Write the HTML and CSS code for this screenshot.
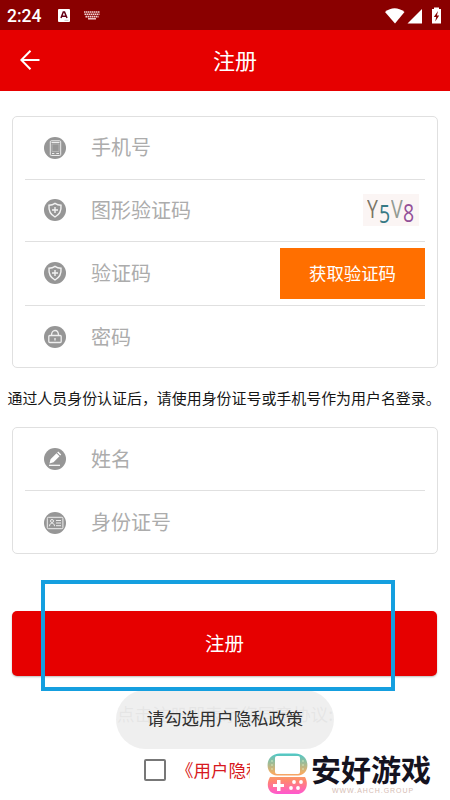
FILE: index.html
```html
<!DOCTYPE html>
<html lang="zh-CN">
<head>
<meta charset="utf-8">
<title>注册</title>
<link rel="stylesheet" href="styles.css">
</head>
<body>
<div class="screen">
  <header class="status">
    <span class="time">2:24</span>
    <svg class="ime" width="12" height="13" viewBox="0 0 12 13"><rect width="12" height="13" rx="1" fill="#fff"/><path d="M3 9 5.3 3h1.2L9 9M4 7.2h4" fill="none" stroke="#650014" stroke-width="1.5"/><path d="M6.5 11.3h4" stroke="#bbb" stroke-width=".8"/></svg>
    <svg class="keyboard" width="16" height="9" viewBox="0 0 16 9" stroke="#f4d5d5" fill="none"><path d="M0 1h16M.5 3.3h15M1.5 5.6h13" stroke-width="1.6" stroke-dasharray="1.5 .5"/><path d="M4 7.8h8" stroke-width="1.4"/></svg>
    <svg class="signals" width="57" height="17" viewBox="0 0 57 17" fill="#fff"><path d="M0 5Q9.500-2.500 19.500 5L10 16.500Z"/><path d="M37 2v14.500H22.500Z"/><path d="M47 2h2V.5h5V2h2v14.500h-9Z"/><path d="M53 4l-4.200 6h2.400l-1 4.500 4-6h-2.300Z" fill="#850000"/></svg>
  </header>
  <nav class="bar">
    <svg class="back" width="20" height="20" viewBox="0 0 20 20" fill="none" stroke="#fff" stroke-width="2"><path d="M19.500 10H1.500M10.500.7 1.300 10l9.200 9.300"/></svg>
    <h1>注册</h1>
  </nav>
  <main>
    <section class="card account">
      <div class="row r1">
        <svg class="icon" viewBox="0 0 22 22"><circle cx="11" cy="11" r="11"/><g fill="none" stroke="#eee"><rect x="6.300" y="3.800" width="10.400" height="14.700" rx="1"/><path d="M8 7h7v7.500H8Z" stroke="#bbb" stroke-width=".8"/><path d="M7.500 5.500h8M8 16.500h2.300m2 0H15"/></g></svg>
        <span>手机号</span>
      </div>
      <div class="row r2">
        <svg class="icon" viewBox="0 0 22 22"><circle cx="11" cy="11" r="11"/><path d="M11 4.300Q13.500 6 17 6.200C17.500 11.500 15.500 15.500 11 18 6.500 15.500 4.500 11.500 5 6.200Q8.500 6 11 4.300ZM11 8v6M8 11h6" fill="none" stroke="#f3f3f3" stroke-width="1.400"/></svg>
        <span>图形验证码</span>
        <div class="captcha"><i class="c1">Y</i><i class="c2">5</i><i class="c3">V</i><i class="c4">8</i></div>
      </div>
      <div class="row r3">
        <svg class="icon" viewBox="0 0 22 22"><circle cx="11" cy="11" r="11"/><path d="M11 4.300Q13.500 6 17 6.200C17.500 11.500 15.500 15.500 11 18 6.500 15.500 4.500 11.500 5 6.200Q8.500 6 11 4.300ZM11 8v6M8 11h6" fill="none" stroke="#f3f3f3" stroke-width="1.400"/></svg>
        <span>验证码</span>
        <button class="get">获取验证码</button>
      </div>
      <div class="row r4">
        <svg class="icon" viewBox="0 0 22 22"><circle cx="11" cy="11" r="11"/><g fill="none" stroke="#eee" stroke-width="1.300"><path d="M7.500 9.500C7.500 2.800 14.500 2.800 14.500 9.500"/><rect x="4.800" y="9.500" width="12.400" height="7" rx="1"/><path d="M11 12v2.500"/></g></svg>
        <span>密码</span>
      </div>
    </section>
    <p class="note">通过人员身份认证后，请使用身份证号或手机号作为用户名登录。</p>
    <section class="card identity">
      <div class="row r5">
        <svg class="icon" viewBox="0 0 22 22"><circle cx="11" cy="11" r="11"/><path d="m5.500 15.500 1-4.200 6-6 3 3-6 6Zm7.700-11 1-1 3 3-1 1Z" fill="#fff"/><path d="M5 17.300h11" stroke="#fff" stroke-width="1.200"/></svg>
        <span>姓名</span>
      </div>
      <div class="row r6">
        <svg class="icon" viewBox="0 0 22 22"><circle cx="11" cy="11" r="11"/><g fill="none" stroke="#eee"><rect x="3.300" y="5.300" width="15.600" height="11.400" rx="1"/><circle cx="8" cy="9" r="1.500"/><path d="M5.500 14.200c0-4 5-4 5 0M12 8.500h5M12 11h5M12 13.700h5"/></g></svg>
        <span>身份证号</span>
      </div>
    </section>
    <button class="submit">注册</button>
    <div class="agree">点击注册即表示您同意协议:</div>
    <div class="policy"><span class="check"></span><a>《用户隐私</a></div>
  </main>
  <div class="toast">请勾选用户隐私政策</div>
  <div class="frame"></div>
  <div class="brand">
    <svg width="41" height="42" viewBox="0 0 41 42">
      <defs><linearGradient id="g" x1="0" y1="0" x2="0" y2="1"><stop offset="0" stop-color="#4cc9c9"/><stop offset=".48" stop-color="#f3ad62"/><stop offset=".68" stop-color="#ff866f"/><stop offset="1" stop-color="#ff57d2"/></linearGradient></defs>
      <path d="M13 .5h15C44 .5 44 22 31 22.500H10C-3 22 -3 .5 13 .500ZM3 24h35c5 9-1 17-8 17H10C2 41-2 33 3 24Z" fill="url(#g)"/>
      <rect x="8" y="3" width="25" height="18" rx="2" fill="#fff"/>
      <g fill="#fff"><path d="M10 27h3.500v4H17v3h-3.500v4H10v-4H6v-3h4Z"/><circle cx="27" cy="29" r="1.900"/><circle cx="34" cy="29" r="1.900"/><circle cx="24" cy="35" r="1.900"/><circle cx="31" cy="35" r="1.900"/></g>
      <g fill="#d9f0c2"><circle cx="5" cy="8" r=".8"/><circle cx="5" cy="12" r=".8"/><circle cx="5" cy="16" r=".8"/><circle cx="36" cy="8" r=".8"/><circle cx="36" cy="12" r=".8"/><circle cx="36" cy="16" r=".8"/></g>
    </svg>
    <div class="words"><b>安好游戏</b><small>WWW.AHCH.GROUP</small></div>
  </div>
</div>
</body>
</html>
```
FILE: styles.css
```css
* { box-sizing: border-box; }
body {
  margin: 0;
  background: #fff;
  font-family: "Noto Sans CJK SC", sans-serif;
}
.screen {
  position: relative;
  width: 450px;
  height: 800px;
  overflow: hidden;
}
.status {
  height: 30px;
  background: #8a0000;
  color: #fff;
  display: flex;
  align-items: center;
  padding: 0 8px 0 7px;
}
.time {
  font: 500 17.5px/30px Roboto, sans-serif;
  width: 51px;
  padding-top: 2px;
}
.keyboard { margin-left: 14px; }
.signals { margin-left: auto; }
.bar {
  height: 60.5px;
  background: #e60000;
  color: #fff;
  display: grid;
  grid-template-columns: 20px 1fr;
  align-items: center;
  padding: 0 20px;
}
h1 {
  margin: 0;
  padding-bottom: 2px;
  text-align: center;
  font-size: 22px;
  font-weight: 400;
  line-height: 30px;
}
main { padding-top: 25px; }
.card {
  width: 426px;
  margin-left: 12px;
  border: 1.5px solid #e0e0e0;
  border-radius: 5px;
  padding: 0 12px;
}
.account { height: 252.5px; }
.identity { height: 126.5px; }
.row {
  display: flex;
  align-items: center;
  height: 63px;
  border-bottom: 1.5px solid #e0e0e0;
  padding-left: 19px;
  color: #acacac;
  font-size: 20px;
  font-weight: 400;
}
.r2 { height: 62px; }
.r3 { height: 64px; }
.r4, .r6 { border-bottom: 0; }
.row > span {
  margin-left: 25px;
  padding-bottom: 2px;
}
.icon {
  width: 22px;
  height: 22px;
  fill: #969696;
}
.captcha {
  display: flex;
  width: 56px;
  height: 32px;
  margin: 0 6px 0 auto;
  padding-left: 4px;
  background: #fbf5f4;
  font: 400 26px/28px "Open Sans", sans-serif;
}
.captcha i {
  width: 12px;
  font-style: normal;
  transform: scaleX(.75);
  transform-origin: left;
}
.c1 { color: #7b7566; }
.c2 { color: #367984; padding-top: 5px; }
.c3 { color: #929b93; }
.c4 { color: #935098; padding-top: 4px; }
button {
  border: 0;
  padding: 0 0 1px;
  color: #fff;
  font-family: inherit;
}
.get {
  width: 145px;
  height: 51px;
  margin-left: auto;
  background: #ff6f00;
  font-size: 17.4px;
}
.note {
  margin: 18px 0 18px 7.5px;
  font-size: 14.95px;
  line-height: 23px;
  color: #151515;
  white-space: nowrap;
}
.submit {
  display: block;
  width: 425px;
  height: 65px;
  margin: 57px 0 0 12px;
  border-radius: 5px;
  background: #e60000;
  box-shadow: 0 1px 2px #bbb;
  font-size: 19.5px;
}
.agree {
  margin: 26px 0 0 117px;
  font-size: 17.6px;
  line-height: 24px;
  color: #777;
}
.policy {
  display: flex;
  align-items: center;
  height: 26px;
  margin: 31px 0 0 144px;
  width: 106px;
  overflow: hidden;
}
.check {
  flex: none;
  width: 22px;
  height: 22px;
  border: 2px solid #777;
  border-radius: 2px;
}
.policy a {
  margin-left: 10px;
  font-size: 17.5px;
  color: #d71920;
  white-space: nowrap;
}
.toast {
  position: absolute;
  left: 116px;
  top: 690px;
  width: 218px;
  height: 59px;
  border-radius: 30px;
  background: rgba(238, 238, 238, .93);
  color: #303030;
  font-size: 17.4px;
  line-height: 56px;
  text-align: center;
}
.frame {
  position: absolute;
  left: 41px;
  top: 580px;
  width: 354px;
  height: 111px;
  border: 4px solid #159fdf;
}
.brand {
  position: absolute;
  left: 267px;
  top: 753px;
  display: flex;
}
.words {
  display: flex;
  flex-direction: column;
  margin-left: 3px;
  color: #15131f;
}
.words b {
  font-size: 30px;
  line-height: 31px;
}
.words small {
  margin: 3px 0 0 21px;
  font: 7px/8px "Liberation Sans", sans-serif;
  letter-spacing: .95px;
  color: #d6bdb4;
}
```
